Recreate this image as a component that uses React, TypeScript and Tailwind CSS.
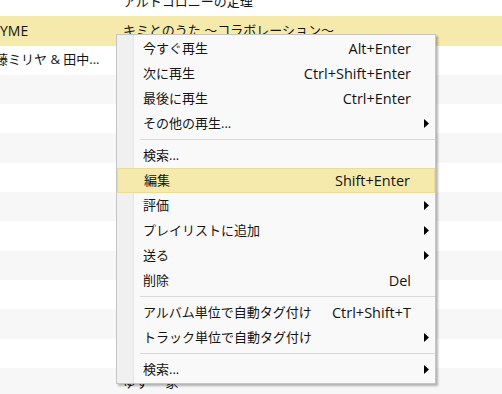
import React from 'react';

type Row = { a: string; aShift?: string; b: string };

const rows: Row[] = [
  { a: '', b: 'アルトコロニーの定理' },
  { a: 'YME', b: 'キミとのうた ～コラボレーション～' },
  { a: '藤ミリヤ & 田中...', aShift: '-ml-[5px]', b: '' },
  { a: '', b: '' },
  { a: '', b: '' },
  { a: '', b: '' },
  { a: '', b: '' },
  { a: '', b: '' },
  { a: '', b: '' },
  { a: '', b: '' },
  { a: '', b: '' },
  { a: '', b: '' },
  { a: '', b: '' },
  { a: '', b: 'ゆず 一家' },
];

type Item =
  | { kind: 'item'; label: string; key?: string; sub?: boolean; active?: boolean }
  | { kind: 'sep' };

const items: Item[] = [
  { kind: 'item', label: '今すぐ再生', key: 'Alt+Enter' },
  { kind: 'item', label: '次に再生', key: 'Ctrl+Shift+Enter' },
  { kind: 'item', label: '最後に再生', key: 'Ctrl+Enter' },
  { kind: 'item', label: 'その他の再生...', sub: true },
  { kind: 'sep' },
  { kind: 'item', label: '検索...' },
  { kind: 'item', label: '編集', key: 'Shift+Enter', active: true },
  { kind: 'item', label: '評価', sub: true },
  { kind: 'item', label: 'プレイリストに追加', sub: true },
  { kind: 'item', label: '送る', sub: true },
  { kind: 'item', label: '削除', key: 'Del' },
  { kind: 'sep' },
  { kind: 'item', label: 'アルバム単位で自動タグ付け', key: 'Ctrl+Shift+T' },
  { kind: 'item', label: 'トラック単位で自動タグ付け', sub: true },
  { kind: 'sep' },
  { kind: 'item', label: '検索...', sub: true },
];

const Arrow = () => (
  <svg width="5" height="9" viewBox="0 0 5 9">
    <path d="M0 0 L5 4.5 L0 9 Z" fill="#000" />
  </svg>
);

const App: React.FC = () => {
  return (
    <div
      className="relative w-[502px] h-[394px] overflow-hidden bg-white text-[13px] text-[#141414]"
      style={{ fontFamily: '"Open Sans", "Noto Sans CJK JP", sans-serif' }}
    >
      {/* track list behind the menu */}
      <div className="-mt-[13px] flex flex-col">
        {rows.map((r, i) => (
          <div
            key={i}
            className={
              'flex items-center h-[29.3px] whitespace-nowrap ' +
              (i === 1 ? 'bg-[#f5e9ab]' : i % 2 === 1 ? 'bg-[#f7f7f7]' : 'bg-white')
            }
          >
            <div className="w-[123px] overflow-hidden">
              <span className={'block ' + (i === 1 ? 'text-[14px] ' : '') + (r.aShift ?? '')}>{r.a}</span>
            </div>
            <div className="flex-1 overflow-hidden">{r.b}</div>
          </div>
        ))}
      </div>

      {/* context menu */}
      <div className="absolute left-[116px] top-[34px] w-[320px] h-[350px] border border-[#c4c4c4] py-[1px] shadow-[2px_2px_2px_rgba(0,0,0,0.28)] bg-[linear-gradient(to_right,#f0f0f0_16px,#e4e4e4_16px,#e4e4e4_17px,#f9f9f9_17px)]">
        {items.map((it, i) =>
          it.kind === 'sep' ? (
            <div key={i} className="h-[7px] flex items-center pl-[23px]">
              <div className="h-px w-full bg-[#d9d9d9]" />
            </div>
          ) : (
            <div
              key={i}
              className={
                'flex items-center h-[25px] pl-[26px] whitespace-nowrap ' +
                (it.active ? 'bg-[#f5e9ab] border border-[#e9dc98] pl-[25px]' : '')
              }
            >
              <span className="flex-1">{it.label}</span>
              <span className="text-[14.5px]">{it.key ?? ''}</span>
              <span className="w-[24px] pl-[13px] flex items-center">{it.sub ? <Arrow /> : null}</span>
            </div>
          )
        )}
      </div>
    </div>
  );
};

export default App;
